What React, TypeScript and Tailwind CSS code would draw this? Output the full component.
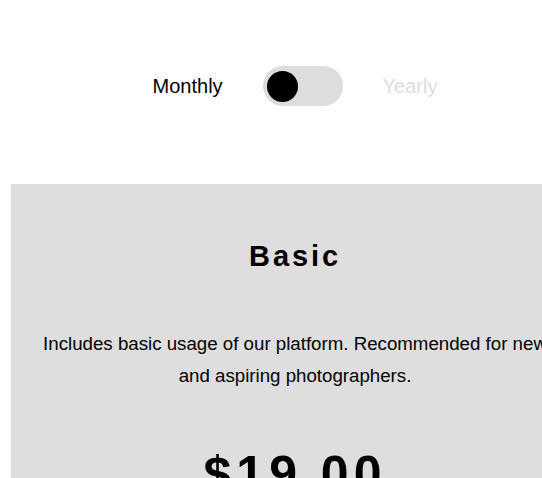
import { useState } from "react";

function Toggle({ on, onChange }: { on: boolean; onChange: () => void }) {
  return (
    <button
      onClick={onChange}
      className="w-[80px] h-[40px] rounded-full bg-[#dddddd] flex items-center px-[4px]"
    >
      <span
        className={
          "block w-[31px] h-[31px] rounded-full bg-black transition-transform " +
          (on ? "translate-x-[41px]" : "translate-x-0")
        }
      />
    </button>
  );
}

function App() {
  const [yearly, setYearly] = useState<boolean>(false);

  return (
    <div className="w-[542px] h-[478px] overflow-hidden bg-white font-['Liberation_Sans',Arial,sans-serif]">
      <div className="w-[590px]">
        <div className="flex items-center justify-center gap-10 pt-[66px] text-[20px]">
          <span className={yearly ? "text-[#dddddd]" : "text-black"}>Monthly</span>
          <Toggle on={yearly} onChange={() => setYearly(!yearly)} />
          <span className={yearly ? "text-black" : "text-[#dddddd]"}>Yearly</span>
        </div>

        <div className="mx-[11px] mt-[78px] bg-[#dedede] px-[24px] pt-[55px] pb-10 flex flex-col items-center text-center text-black">
          <h2 className="text-[29px] font-bold tracking-[0.1em] leading-[34px]">Basic</h2>
          <p className="mt-[55px] text-[18.7px] leading-[32px]">
            Includes basic usage of our platform. Recommended for new and aspiring photographers.
          </p>
          <div className="mt-[54px] text-[50px] font-bold tracking-[0.1em] leading-[57px]">
            {yearly ? "$190.00" : "$19.00"}
          </div>
        </div>
      </div>
    </div>
  );
}

export default App;
